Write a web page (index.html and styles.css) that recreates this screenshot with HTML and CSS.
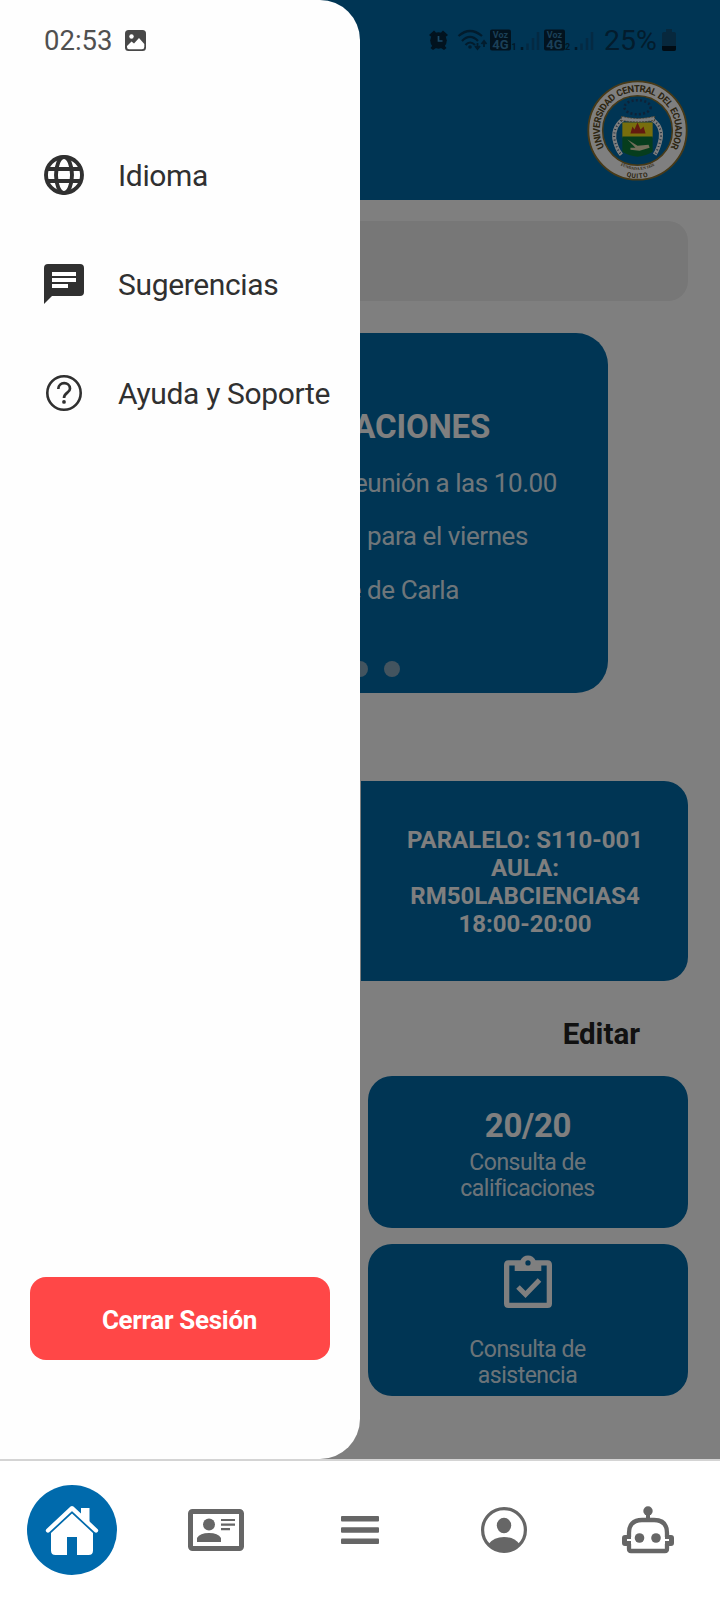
FILE: index.html
```html
<!DOCTYPE html>
<html lang="es">
<head>
<meta charset="utf-8">
<title>Inicio</title>
<link rel="stylesheet" href="styles.css">
</head>
<body>
<div class="app">
  <div class="screen">
    <header class="header">
      <svg class="crest" viewBox="0 0 100 100">
        <defs>
          <path id="arc-top" d="M17 66.500A37.300 37.300 0 1 1 83 66.500"/>
          <path id="arc-mid" d="M22 77Q50 101 78 77"/>
          <path id="arc-low" d="M22 84.500Q50 110 78 84.500"/>
        </defs>
        <circle cx="50" cy="50" r="48.700" fill="#fff" stroke="#8f7430" stroke-width="1.800"/>
        <circle cx="50" cy="50" r="34.500" fill="#006aa8" stroke="#8f7430" stroke-width="1.500"/>
        <ellipse cx="50" cy="27" rx="13" ry="7" fill="none" stroke="#1c4570" stroke-width="2.500" stroke-dasharray="2 2.200"/>
        <path d="M37 38Q26 45 27 58Q29 68 34 74M63 38Q75 45 73 58Q71 68 67 74" fill="none" stroke="#fff" stroke-width="4"/>
        <path d="M37 38Q26 45 27 58Q29 68 34 74M63 38Q75 45 73 58Q71 68 67 74" fill="none" stroke="#4a6480" stroke-width="2" stroke-dasharray="1 2.500"/>
        <path d="M34 36Q50 40 67 36V40Q50 43 34 40Z" fill="#fff" stroke="#806b40" stroke-width=".8" stroke-dasharray="2 1"/>
        <path d="M35 42H65V57H35Z" fill="#f1dd1a"/>
        <path d="M35 56H65V71Q59 75 50 76Q41 75 35 71Z" fill="#0d7b3a"/>
        <path d="M43 53L45 46L47 49L50 42L53 49L56 46L58 53Z" fill="#c63520"/>
        <path d="M40 59L50 65L61 64L62 67L52 70L43 69V67H48Z" fill="#e4dfb6"/>
        <text class="crest-name"><textPath href="#arc-top" startOffset="50%" text-anchor="middle">UNIVERSIDAD CENTRAL DEL ECUADOR</textPath></text>
        <text class="crest-date"><textPath href="#arc-mid" startOffset="50%" text-anchor="middle">FUNDADA EN 1826</textPath></text>
        <text class="crest-city"><textPath href="#arc-low" startOffset="50%" text-anchor="middle">QUITO</textPath></text>
      </svg>
    </header>
    <main class="content">
      <div class="search"></div>
      <section class="notices">
        <h2 class="notices-title">NOTIFICACIONES</h2>
        <p class="notice notice-meeting">Reunión a las 10.00</p>
        <p class="notice notice-friday">para el viernes</p>
        <p class="notice notice-carla">Informe de Carla</p>
        <div class="dots"><i></i><i></i><i></i></div>
      </section>
      <section class="schedule">
        <p class="schedule-text">PARALELO: S110-001<br>AULA:<br>RM50LABCIENCIAS4<br>18:00-20:00</p>
      </section>
      <div class="edit">Editar</div>
      <section class="tiles">
        <div class="tile">
          <strong class="score">20/20</strong>
          <span class="tile-label">Consulta de<br>calificaciones</span>
        </div>
        <div class="tile tile-attendance">
          <svg class="clipboard" viewBox="0 0 48 54">
            <path fill-rule="evenodd" d="M4.500 5.300H16.500A8.300 8.300 0 0 1 31.500 5.300H43.500Q48 5.300 48 10V48.500Q48 53 43.500 53H4.500Q0 53 0 48.500V10Q0 5.300 4.500 5.300ZM5.300 10.600V47.700H42.700V10.600H37.300V16H10.700V10.600ZM24 5.300A2.600 2.600 0 1 0 24 10.600A2.600 2.600 0 1 0 24 5.300Z"/>
            <path d="M14 32L21.500 39.500L35.500 25" fill="none" stroke="#fff" stroke-width="5"/>
          </svg>
          <span class="tile-label">Consulta de<br>asistencia</span>
        </div>
      </section>
    </main>
    <div class="scrim"></div>
    <aside class="drawer">
      <nav class="menu">
        <a class="menu-item">
          <svg class="menu-icon" viewBox="0 0 40 40" fill="none" stroke="#303030" stroke-width="3.900"><circle cx="20" cy="20" r="18"/><ellipse cx="20" cy="20" rx="8" ry="18"/><path d="M2.500 14H37.500M2.500 26H37.500"/></svg>
          <span class="menu-label">Idioma</span>
        </a>
        <a class="menu-item">
          <svg class="menu-icon" viewBox="0 0 40 40"><path fill="#303030" d="M4 0H36Q40 0 40 4V28Q40 32 36 32H8L0 40V4Q0 0 4 0Z"/><path fill="#fff" d="M8 8H32V12H8ZM8 14H32V18H8ZM8 20H24V24H8Z"/></svg>
          <span class="menu-label">Sugerencias</span>
        </a>
        <a class="menu-item">
          <svg class="menu-icon" viewBox="0 0 40 40" fill="none" stroke="#303030"><circle cx="20" cy="20" r="16.700" stroke-width="2.600"/><path d="M14.300 16C14.300 8.300 25.900 8.300 26 15.700C26 19.700 20 19.700 20 25" stroke-width="2.700"/><circle cx="20" cy="28.900" r="1.900" fill="#303030" stroke="none"/></svg>
          <span class="menu-label">Ayuda y Soporte</span>
        </a>
      </nav>
      <button class="logout">Cerrar Sesión</button>
    </aside>
    <div class="status">
      <div class="status-left">
        <span class="clock">02:53</span>
        <svg class="photo" viewBox="0 0 21 21"><rect width="21" height="21" rx="3.500" fill="#484848"/><path d="M2 16L6.500 11.500L9 13.500L14 8L19.300 14V17Q19.300 19.300 17 19.300H4Q2 19.300 2 17Z" fill="#fff"/><circle cx="6.500" cy="6.500" r="2.200" fill="#fff"/></svg>
      </div>
      <div class="status-right">
        <svg class="status-icons" viewBox="0 0 168 26">
          <g fill="#02131f"><circle cx="10.500" cy="13.500" r="8.300"/><path d="M1 8L6 3.500L8 5.500L3.500 10ZM20 8L15 3.500L13 5.500L17.500 10ZM2.500 21L5 18L8 21L5 23ZM18.500 21L16 18L13 21L16 23Z"/></g>
          <path d="M10.500 9V14H14.500" fill="none" stroke="#1b4a68" stroke-width="1.700"/>
          <g fill="none" stroke="#021c2d" stroke-width="2.200"><path d="M30.500 9Q42 -1 54 9M34 14Q42 6 50 14M37.500 18Q42 13 47 18"/><path d="M49.500 16V22M47 19L49.500 22L52 19M56 20V14M53.500 17L56 14L58.500 17" stroke-width="1.800"/></g>
          <circle cx="42" cy="20" r="1.800" fill="#021c2d"/>
          <rect x="62" y="2.500" width="21" height="21" rx="2" fill="#02131f"/><rect x="116" y="2.500" width="21" height="21" rx="2" fill="#02131f"/>
          <g class="volte"><text x="72.500" y="10.500" text-anchor="middle">Voz</text><text class="volte-net" x="72.500" y="22" text-anchor="middle">4G</text><text x="126.500" y="10.500" text-anchor="middle">Voz</text><text class="volte-net" x="126.500" y="22" text-anchor="middle">4G</text></g>
          <g class="sim"><text x="83.500" y="23">1</text><text x="137" y="23">2</text></g>
          <path d="M94 20V23M148 20V23" stroke="#021827" stroke-width="2.500"/>
          <path d="M99.500 16.500V23M105 11V23M110 5V23M153.500 16.500V23M159 11V23M164 5V23" stroke="#042a43" stroke-width="2.500"/>
        </svg>
        <span class="percent">25%</span>
        <svg class="battery" viewBox="0 0 14 22"><path d="M4 0H10V3H12Q14 3 14 5V20Q14 22 12 22H2Q0 22 0 20V5Q0 3 2 3H4Z" fill="#07283d"/><path d="M0 17H14V20Q14 22 12 22H2Q0 22 0 20Z" fill="#010c14"/></svg>
      </div>
    </div>
  </div>
  <nav class="tabs">
    <a class="tab"><span class="tab-active">
      <svg class="home" viewBox="0 0 54 52" fill="#fff"><path d="M3 26.500L27 4.200L51 26.500" fill="none" stroke="#fff" stroke-width="4.300" stroke-linecap="round" stroke-linejoin="round"/><path d="M36 4H44.500V19L36 11ZM27 9.500L48 29V46.500Q48 51 43.500 51H32V33H22V51H10.500Q6 51 6 46.500V29Z"/></svg>
    </span></a>
    <a class="tab"><svg class="idcard" viewBox="0 0 56 42" fill="#666"><rect x="2.500" y="2.500" width="51" height="37" rx="2" fill="none" stroke="#666" stroke-width="5"/><circle cx="21" cy="15.500" r="6"/><path d="M9 33V29Q12 24 21 24Q30 24 33 29V33ZM33 10H47V12H33ZM33 14.500H47V16.700H33ZM33 19H42V21.200H33Z"/></svg></a>
    <a class="tab"><svg class="burger" viewBox="0 0 38 28" fill="#666"><rect width="38" height="5.500" rx="1"/><rect y="11.300" width="38" height="5.500" rx="1"/><rect y="22.500" width="38" height="5.500" rx="1"/></svg></a>
    <a class="tab"><svg class="user" viewBox="0 0 46 46" fill="#666"><circle cx="23" cy="23" r="21.400" fill="none" stroke="#666" stroke-width="3.200"/><ellipse cx="23" cy="18.500" rx="7.200" ry="7.800"/><path d="M7.500 37Q13 30 23 30Q33 30 38.500 37Q32 45 23 45Q14 45 7.500 37Z"/></svg></a>
    <a class="tab"><svg class="robot" viewBox="0 0 52 48" fill="#666"><circle cx="26" cy="5" r="4.700"/><path d="M24 7H28V14H24Z"/><path d="M7 31V27Q7 14 20 14H32Q45 14 45 27V31M7 38V43Q7 45 9 45H43Q45 45 45 43V38" fill="none" stroke="#666" stroke-width="4.300"/><path d="M3 29H9V33H5V35H9V40H3Q0 40 0 37V32Q0 29 3 29ZM43 29H49Q52 29 52 32V37Q52 40 49 40H43V35H47V33H43Z"/><circle cx="17.500" cy="32" r="4.800"/><circle cx="34" cy="32" r="4.800"/></svg></a>
  </nav>
</div>
</body>
</html>
```

FILE: styles.css
```css
* { box-sizing: border-box; }
body { margin: 0; font-family: Roboto, "Liberation Sans", sans-serif; background: #fff; }
h2, p { margin: 0; }
svg { display: block; flex: none; }
.app { width: 720px; height: 1600px; display: flex; flex-direction: column; overflow: hidden; }
.screen { position: relative; height: 1459px; overflow: hidden; background: #fff; }

.header { height: 200px; background: #006aa8; display: flex; justify-content: flex-end; padding: 80px 32px 0 0; }
.crest { width: 101px; height: 101px; }
.crest text { font-family: "Liberation Serif", serif; font-weight: 700; fill: #594a25; }
.crest .crest-name { font-family: Roboto, sans-serif; font-size: 9.400px; letter-spacing: -.55px; word-spacing: 1px; }
.crest .crest-date { font-size: 4px; }
.crest .crest-city { font-family: Roboto, sans-serif; font-size: 6.500px; letter-spacing: .8px; }

.content { padding: 21px 32px 0; display: flex; flex-direction: column; }
.search { height: 80px; border-radius: 20px; background: #eee; }
.notices { width: 496px; height: 360px; margin: 32px auto 0; padding: 74px 51px 0 0; border-radius: 32px; background: #006aa8; color: #fff; text-align: right; white-space: nowrap; }
.notices-title { font-size: 33px; line-height: 40px; margin-right: 67px; letter-spacing: -.2px; }
.notice { font-size: 26px; line-height: 53.300px; letter-spacing: -.42px; color: rgba(255, 255, 255, .9); }
.notices-title + .notice { margin-top: 10px; }
.notice-friday { margin-right: 29px; }
.notice-carla { margin-right: 98px; }
.dots { display: flex; justify-content: flex-end; gap: 16px; margin: 44px 157px 0 0; }
.dots i { width: 16px; height: 16px; border-radius: 50%; background: #86a8be; }
.schedule { width: 327px; height: 200px; margin: 88px 0 0 auto; padding: 2px 0 0 1px; border-radius: 0 24px 24px 0; background: #006aa8; display: flex; align-items: center; justify-content: center; }
.schedule-text { color: #fff; font-size: 24px; line-height: 28px; font-weight: 700; text-align: center; }
.edit { height: 95px; padding-right: 48px; font-size: 29.500px; line-height: 106px; font-weight: 700; text-align: right; color: #222; }
.tiles { width: 320px; margin-left: auto; display: flex; flex-direction: column; gap: 16px; }
.tile { height: 152px; border-radius: 24px; background: #006aa8; color: #fff; display: flex; flex-direction: column; align-items: center; padding-top: 30px; }
.score { font-size: 33px; line-height: 40px; letter-spacing: -.3px; }
.tile-label { font-size: 23px; line-height: 26px; letter-spacing: -.5px; text-align: center; color: rgba(255, 255, 255, .87); margin: 4px 1px 0 0; }
.tile-attendance { padding-top: 11px; }
.tile-attendance .tile-label { margin-top: 28px; }
.clipboard { width: 48px; height: 54px; fill: #fff; }

.scrim { position: absolute; inset: 0; background: rgba(0, 0, 0, .5); }
.drawer { position: absolute; left: 0; top: 0; width: 360px; height: 1459px; border-radius: 0 40px 40px 0; background: #fefefe; padding: 120px 30px 0; display: flex; flex-direction: column; }
.menu { display: flex; flex-direction: column; }
.menu-item { height: 109px; display: flex; align-items: center; gap: 34px; padding-left: 14px; font-size: 30px; letter-spacing: -.35px; color: #303030; white-space: nowrap; }
.menu-label { padding-top: 2px; }
.menu-icon { width: 40px; height: 40px; }
.logout { margin-top: auto; margin-bottom: 99px; height: 83px; flex: none; border: 0; border-radius: 16px; background: #ff4747; color: #fff; font: 700 26px Roboto, sans-serif; letter-spacing: -.3px; padding: 2px 1px 0 0; }

.status { position: absolute; left: 0; right: 0; top: 0; height: 80px; padding: 0 44px; display: flex; justify-content: space-between; align-items: center; }
.status-left, .status-right { display: flex; align-items: center; }
.clock { font-size: 27.500px; color: #505050; }
.photo { width: 21px; height: 21px; margin-left: 13px; }
.status-icons { width: 168px; height: 26px; }
.volte text { font-size: 9px; font-weight: 700; fill: #1b4058; }
.volte .volte-net { font-size: 13px; }
.sim text { font-size: 9px; font-weight: 700; fill: #021827; }
.percent { font-size: 28.500px; margin-left: 8px; color: #031c2d; }
.battery { width: 14px; height: 22px; margin-left: 5px; }

.tabs { flex: 1; border-top: 2px solid #d4d4d4; background: #fff; display: grid; grid-template-columns: repeat(5, 1fr); align-items: center; justify-items: center; padding-bottom: 1px; }
.tab-active { width: 90px; height: 90px; border-radius: 50%; background: #006aac; display: flex; align-items: center; justify-content: center; }
.home { width: 54px; height: 52px; }
.idcard { width: 56px; height: 42px; }
.burger { width: 38px; height: 28px; }
.user { width: 46px; height: 46px; }
.robot { width: 52px; height: 48px; }
```
